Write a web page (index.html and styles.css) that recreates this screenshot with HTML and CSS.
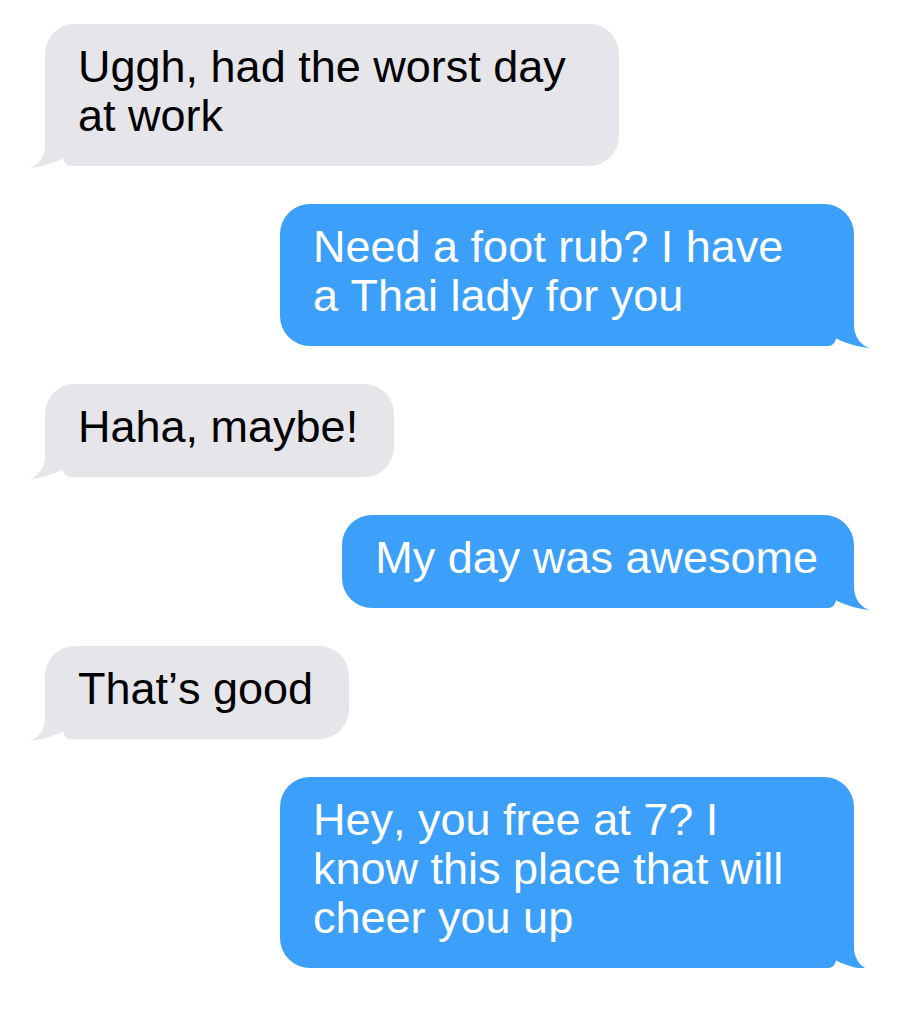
FILE: index.html
```html
<!DOCTYPE html>
<html lang="en">
<head>
<meta charset="utf-8">
<title>Messages</title>
<link rel="stylesheet" href="styles.css">
</head>
<body>
<div class="thread">
  <div class="msg in">Uggh, had the worst day at work</div>
  <div class="msg out">Need a foot rub? I have a Thai lady for you</div>
  <div class="msg in">Haha, maybe!</div>
  <div class="msg out">My day was awesome</div>
  <div class="msg in">That’s good</div>
  <div class="msg out">Hey, you free at 7? I know this place that will cheer you up</div>
</div>
</body>
</html>
```
FILE: styles.css
```css
body {
  margin: 0;
  background: #ffffff;
  font-family: "Liberation Sans", Arial, sans-serif;
}

.thread {
  width: 900px;
  box-sizing: border-box;
  display: flex;
  flex-direction: column;
  gap: 38px;
  padding: 24px 46px 0 45px;
}

.msg {
  position: relative;
  max-width: 574px;
  box-sizing: border-box;
  padding: 18px 36px 26px 33px;
  border-radius: 30px;
  font-size: 45px;
  line-height: 49px;
  font-kerning: none;
}

.in {
  align-self: flex-start;
  background: #e5e5ea;
  color: #000000;
}

.out {
  align-self: flex-end;
  background: #3ca0fa;
  color: #ffffff;
}

.msg::before,
.msg::after {
  content: "";
  position: absolute;
  bottom: -3px;
  width: 50px;
  height: 33px;
}

.out::before,
.out::after {
  right: -20px;
}

.in::before,
.in::after {
  left: -20px;
  transform: scaleX(-1);
}

.msg::before {
  background: #ffffff;
  clip-path: path("M0 30 L4 30 C8 30 11 27 12 22 C20 27 34 31 46 32 L50 32 L50 33 L0 33 Z");
}

.msg::after {
  background: inherit;
  clip-path: path("M0 0 L0 30 L4 30 C8 30 11 27 12 22 C20 27 34 31 46 32 C38 30 30 22 30 9 L30 0 Z");
}
```
